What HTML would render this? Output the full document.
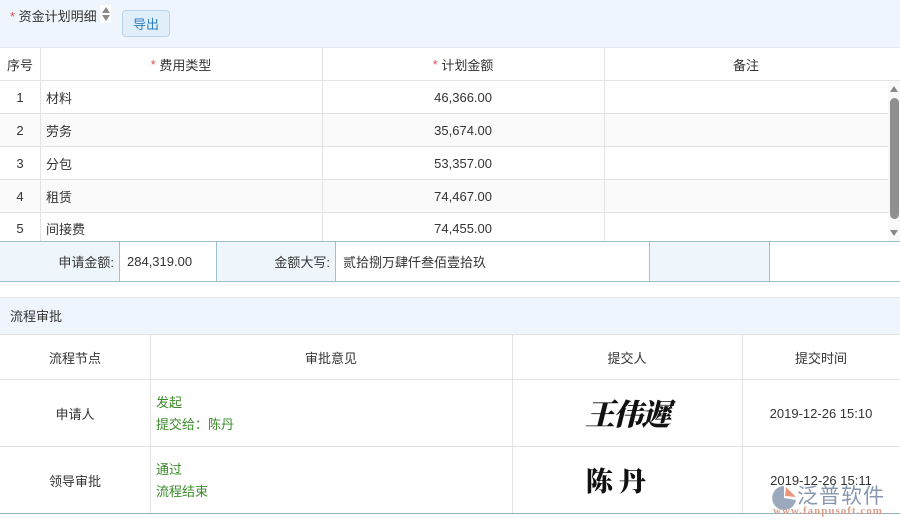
<!DOCTYPE html>
<html><head><meta charset="utf-8"><style>
*{margin:0;padding:0;box-sizing:border-box}
body{width:900px;height:527px;overflow:hidden;background:#fff;font-family:"Liberation Sans","Noto Sans CJK SC",sans-serif;font-size:13px;color:#333;position:relative}
.a{position:absolute}
.c{position:absolute;display:flex;align-items:center}
.r{color:#d9534f}
.g{color:#3a8a2a}
</style></head><body>
<div class="a" style="left:0;top:0;width:900px;height:48px;background:#eff5fd;border-bottom:1px solid #e3e8ee"></div>
<div class="a" style="left:10px;top:6px;font-size:13px"><span class="r">*</span> 资金计划明细</div>
<div class="a" style="left:100px;top:5px;width:11px;height:18px;background:#fff"></div>
<svg class="a" style="left:101px;top:6px" width="10" height="16"><path d="M1 7 L5 1 L9 7Z M1 9 L5 15 L9 9Z" fill="#8a8a8a"/></svg>
<div class="c" style="left:122px;top:10px;width:48px;height:27px;background:#e0eefa;border:1px solid #b9d4ea;border-radius:4px;justify-content:center;color:#2d7fc1;font-size:13px">导出</div>
<div class="a" style="left:0;top:48px;width:900px;height:33px;background:#fff;border-bottom:1px solid #e3e3e3"></div>
<div class="c" style="left:0;top:48px;width:40px;height:33px;justify-content:center">序号</div>
<div class="c" style="left:40px;top:48px;width:282px;height:33px;justify-content:center"><span class="r">*</span>&nbsp;费用类型</div>
<div class="c" style="left:322px;top:48px;width:282px;height:33px;justify-content:center"><span class="r">*</span>&nbsp;计划金额</div>
<div class="c" style="left:604px;top:48px;width:284px;height:33px;justify-content:center">备注</div>
<div class="a" style="left:0;top:81px;width:888px;height:33px;border-bottom:1px solid #e3e3e3;background:#fff"></div>
<div class="a" style="left:0;top:114px;width:888px;height:33px;border-bottom:1px solid #e3e3e3;background:#fafafa"></div>
<div class="a" style="left:0;top:147px;width:888px;height:33px;border-bottom:1px solid #e3e3e3;background:#fff"></div>
<div class="a" style="left:0;top:180px;width:888px;height:33px;border-bottom:1px solid #e3e3e3;background:#fafafa"></div>
<div class="a" style="left:0;top:213px;width:888px;height:28px;background:#fff"></div>
<div class="a" style="left:40px;top:48px;width:1px;height:193px;background:#e3e3e3"></div>
<div class="a" style="left:322px;top:48px;width:1px;height:193px;background:#e3e3e3"></div>
<div class="a" style="left:604px;top:48px;width:1px;height:193px;background:#e3e3e3"></div>
<div class="c" style="left:0;top:81px;width:40px;height:33px;justify-content:center">1</div>
<div class="c" style="left:0;top:114px;width:40px;height:33px;justify-content:center">2</div>
<div class="c" style="left:0;top:147px;width:40px;height:33px;justify-content:center">3</div>
<div class="c" style="left:0;top:180px;width:40px;height:33px;justify-content:center">4</div>
<div class="c" style="left:0;top:213px;width:40px;height:30px;justify-content:center">5</div>
<div class="c" style="left:46px;top:81px;height:33px">材料</div>
<div class="c" style="left:46px;top:114px;height:33px">劳务</div>
<div class="c" style="left:46px;top:147px;height:33px">分包</div>
<div class="c" style="left:46px;top:180px;height:33px">租赁</div>
<div class="c" style="left:46px;top:213px;height:30px">间接费</div>
<div class="c" style="left:322px;top:81px;width:170px;height:33px;justify-content:flex-end">46,366.00</div>
<div class="c" style="left:322px;top:114px;width:170px;height:33px;justify-content:flex-end">35,674.00</div>
<div class="c" style="left:322px;top:147px;width:170px;height:33px;justify-content:flex-end">53,357.00</div>
<div class="c" style="left:322px;top:180px;width:170px;height:33px;justify-content:flex-end">74,467.00</div>
<div class="c" style="left:322px;top:213px;width:170px;height:30px;justify-content:flex-end">74,455.00</div>
<div class="a" style="left:888px;top:81px;width:12px;height:160px;background:#f8f8f8"></div>
<svg class="a" style="left:889px;top:85px" width="10" height="8"><path d="M1 7L5 1L9 7Z" fill="#888"/></svg>
<div class="a" style="left:890px;top:98px;width:9px;height:121px;background:#8f8f8f;border-radius:5px"></div>
<svg class="a" style="left:889px;top:229px" width="10" height="8"><path d="M1 1L5 7L9 1Z" fill="#888"/></svg>
<div class="a" style="left:0;top:241px;width:900px;height:41px;border-top:1px solid #9fc0cf;border-bottom:1px solid #9fc0cf;background:#fff"></div>
<div class="a" style="left:0;top:242px;width:120px;height:39px;background:#eef6fc;border-right:1px solid #9fc0cf"></div>
<div class="a" style="left:216px;top:242px;width:120px;height:39px;background:#eef6fc;border-left:1px solid #9fc0cf;border-right:1px solid #9fc0cf"></div>
<div class="a" style="left:649px;top:242px;width:121px;height:39px;background:#eef6fc;border-left:1px solid #9fc0cf;border-right:1px solid #9fc0cf"></div>
<div class="c" style="left:0;top:242px;width:114px;height:39px;justify-content:flex-end">申请金额:</div>
<div class="c" style="left:127px;top:242px;height:39px">284,319.00</div>
<div class="c" style="left:216px;top:242px;width:114px;height:39px;justify-content:flex-end">金额大写:</div>
<div class="c" style="left:343px;top:242px;height:39px">贰拾捌万肆仟叁佰壹拾玖</div>
<div class="a" style="left:0;top:297px;width:900px;height:38px;background:#eef5fd;border-top:1px solid #dfe6ee;border-bottom:1px solid #e3e3e3"></div>
<div class="c" style="left:10px;top:296px;height:38px">流程审批</div>
<div class="a" style="left:0;top:379px;width:900px;height:1px;background:#e3e3e3"></div>
<div class="a" style="left:0;top:446px;width:900px;height:1px;background:#e3e3e3"></div>
<div class="a" style="left:0;top:513px;width:900px;height:1px;background:#8fb3c3"></div>
<div class="a" style="left:150px;top:335px;width:1px;height:178px;background:#e3e3e3"></div>
<div class="a" style="left:512px;top:335px;width:1px;height:178px;background:#e3e3e3"></div>
<div class="a" style="left:742px;top:335px;width:1px;height:178px;background:#e3e3e3"></div>
<div class="c" style="left:0;top:335px;width:150px;height:44px;justify-content:center">流程节点</div>
<div class="c" style="left:150px;top:335px;width:362px;height:44px;justify-content:center">审批意见</div>
<div class="c" style="left:512px;top:335px;width:230px;height:44px;justify-content:center">提交人</div>
<div class="c" style="left:742px;top:335px;width:158px;height:44px;justify-content:center">提交时间</div>
<div class="c" style="left:0;top:380px;width:150px;height:66px;justify-content:center">申请人</div>
<div class="c" style="left:0;top:447px;width:150px;height:66px;justify-content:center">领导审批</div>
<div class="a g" style="left:156px;top:392px;line-height:22px">发起<br>提交给：陈丹</div>
<div class="a g" style="left:156px;top:459px;line-height:22px">通过<br>流程结束</div>
<div class="a" style="left:585px;top:390px;font-family:'Noto Serif CJK SC',serif;font-size:30px;font-weight:900;font-style:italic;color:#111;letter-spacing:-2px">王伟遲</div>
<div class="a" style="left:586px;top:460px;font-family:'Noto Serif CJK SC',serif;font-size:27px;font-weight:900;color:#111;letter-spacing:6px">陈丹</div>
<div class="c" style="left:742px;top:380px;width:158px;height:66px;justify-content:center">2019-12-26 15:10</div>
<div class="c" style="left:742px;top:447px;width:158px;height:66px;justify-content:center">2019-12-26 15:11</div>
<svg class="a" style="left:770px;top:484px;opacity:.85" width="28" height="26"><path d="M14 2 A12 12 0 1 0 26 16 L14 14Z" fill="#8a9bb5"/><path d="M16 3 L26 13 L15 12Z" fill="#e8866a"/></svg>
<div class="a" style="left:797px;top:480px;font-size:21px;color:#7b8ca8;opacity:.9;letter-spacing:1px">泛普软件</div>
<div class="a" style="left:773px;top:505px;font-family:'Liberation Serif',serif;font-size:11px;font-weight:bold;color:#d9a08a;letter-spacing:1px">www.fanpusoft.com</div>
</body></html>
